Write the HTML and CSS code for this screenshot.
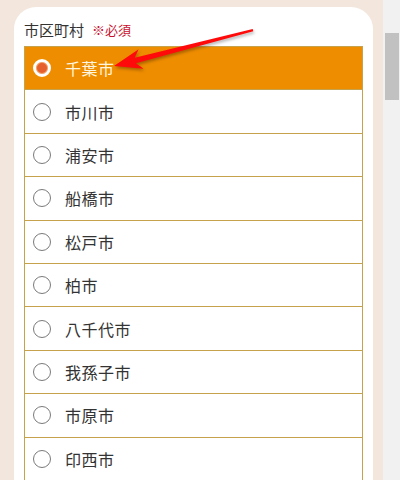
FILE: index.html
```html
<!DOCTYPE html>
<html lang="ja">
<head>
<meta charset="utf-8">
<link rel="stylesheet" href="styles.css">
</head>
<body>
<div class="page">
  <div class="card">
    <div class="label">市区町村<span class="req">※必須</span></div>
    <ul class="list">
      <li class="row selected"><span class="radio"></span><span class="name">千葉市</span></li>
      <li class="row"><span class="radio"></span><span class="name">市川市</span></li>
      <li class="row"><span class="radio"></span><span class="name">浦安市</span></li>
      <li class="row"><span class="radio"></span><span class="name">船橋市</span></li>
      <li class="row"><span class="radio"></span><span class="name">松戸市</span></li>
      <li class="row"><span class="radio"></span><span class="name">柏市</span></li>
      <li class="row"><span class="radio"></span><span class="name">八千代市</span></li>
      <li class="row"><span class="radio"></span><span class="name">我孫子市</span></li>
      <li class="row"><span class="radio"></span><span class="name">市原市</span></li>
      <li class="row"><span class="radio"></span><span class="name">印西市</span></li>
    </ul>
  </div>
</div>
<div class="scrollbar"><div class="thumb"></div></div>
<svg class="arrow" width="400" height="480" viewBox="0 0 400 480">
  <polygon points="114,66 138.6,49.3 134.7,57.8 252.7,29 253.3,31.2 135.9,63.2 143.6,68.7" fill="#ff0a0a"/>
</svg>
</body>
</html>
```
FILE: styles.css
```css
html, body {
  margin: 0;
  padding: 0;
}
body {
  width: 400px;
  height: 480px;
  overflow: hidden;
  display: flex;
  font-family: "Noto Sans CJK JP", "Noto Sans", sans-serif;
  color: #333;
}
.page {
  flex: 1;
  background: #f3e6dd;
  padding: 7px 10px 0 14px;
}
.card {
  background: #fff;
  border-radius: 22px 22px 0 0;
  padding: 12px 10px 0 10px;
  height: 100%;
  box-sizing: border-box;
  overflow: hidden;
}
.label {
  display: flex;
  align-items: center;
  height: 22px;
  font-size: 15px;
  line-height: 22px;
  margin-bottom: 5px;
  color: #333;
}
.req {
  font-size: 13px;
  line-height: 22px;
  color: #c8102e;
  margin-left: 8px;
}
.list {
  list-style: none;
  margin: 0;
  padding: 0;
  border: 1px solid #c6a24c;
  border-bottom: none;
}
.row {
  height: 43.4px;
  box-sizing: border-box;
  border-bottom: 1px solid #c6a24c;
  display: flex;
  align-items: center;
  padding-left: 8px;
  font-size: 16px;
  line-height: 22px;
}
.radio {
  width: 18px;
  height: 18px;
  box-sizing: border-box;
  border: 1px solid #7a7a7a;
  border-radius: 50%;
  background: #fff;
  margin-right: 14px;
  flex: none;
}
.row.selected {
  background: #ef8d00;
  color: #fff6df;
}
.row.selected .radio {
  border: 3px solid #fff;
  background: #e5602c;
  box-shadow: inset 0 0 0 1px #f5a060;
}
.name {
  letter-spacing: 0.5px;
}
.scrollbar {
  width: 17px;
  background: #f1f1f1;
  padding: 33px 1px 0 2px;
  box-sizing: border-box;
}
.thumb {
  height: 67px;
  background: #c1c1c1;
}
.arrow {
  position: absolute;
  left: 0;
  top: 0;
  pointer-events: none;
  filter: drop-shadow(1px 2px 1.5px rgba(0,0,0,0.3));
}
```
